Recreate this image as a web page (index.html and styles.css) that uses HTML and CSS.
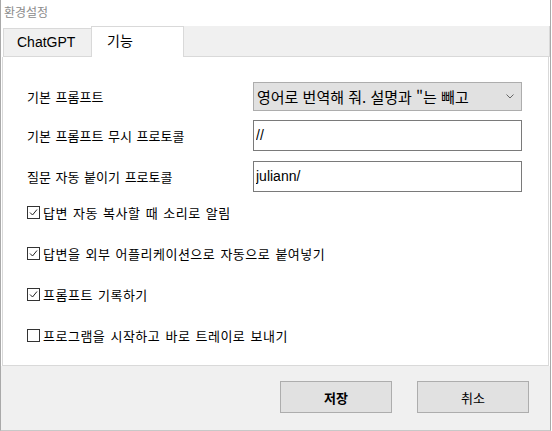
FILE: index.html
```html
<!DOCTYPE html>
<html lang="ko">
<head>
    <meta charset="UTF-8">
    <title>환경설정</title>
    <link rel="stylesheet" href="styles.css">
</head>
<body>
    <div class="window">
        <div class="titlebar">환경설정</div>

        <div class="tabs">
            <div class="tab">ChatGPT</div>
            <div class="tab active">기능</div>
            <div class="tab-fill"></div>
        </div>

        <div class="panel">
            <div class="field">
                <label class="field-label">기본 프롬프트</label>
                <div class="select">
                    <span>영어로 번역해 줘. 설명과 "는 빼고</span>
                    <svg class="chevron" width="8" height="5" viewBox="0 0 8 5">
                        <path d="M0.5 0.5 L4 4 L7.5 0.5" fill="none" stroke="#666" stroke-width="1"/>
                    </svg>
                </div>
            </div>
            <div class="field">
                <label class="field-label">기본 프롬프트 무시 프로토콜</label>
                <input class="text-input" type="text" value="//">
            </div>
            <div class="field">
                <label class="field-label">질문 자동 붙이기 프로토콜</label>
                <input class="text-input" type="text" value="juliann/">
            </div>

            <div class="checks">
                <label class="check">
                    <span class="box"><svg width="11" height="11" viewBox="0 0 11 11"><path d="M2 5.5 L4.5 8 L9 2.5" fill="none" stroke="#222" stroke-width="1"/></svg></span>
                    답변 자동 복사할 때 소리로 알림
                </label>
                <label class="check">
                    <span class="box"><svg width="11" height="11" viewBox="0 0 11 11"><path d="M2 5.5 L4.5 8 L9 2.5" fill="none" stroke="#222" stroke-width="1"/></svg></span>
                    답변을 외부 어플리케이션으로 자동으로 붙여넣기
                </label>
                <label class="check">
                    <span class="box"><svg width="11" height="11" viewBox="0 0 11 11"><path d="M2 5.5 L4.5 8 L9 2.5" fill="none" stroke="#222" stroke-width="1"/></svg></span>
                    프롬프트 기록하기
                </label>
                <label class="check">
                    <span class="box"></span>
                    프로그램을 시작하고 바로 트레이로 보내기
                </label>
            </div>
        </div>

        <div class="footer">
            <button class="btn default">저장</button>
            <button class="btn">취소</button>
        </div>
    </div>
</body>
</html>
```

FILE: styles.css
```css
:root {
    --face: #f0f0f0;
    --edge: #d9d9d9;
    --frame: #a9a9a9;
    --btn-bg: #e1e1e1;
    --btn-border: #adadad;
    --input-border: #7a7a7a;
    --text: #000000;
}

* {
    box-sizing: border-box;
    margin: 0;
    padding: 0;
}

body {
    font-family: "Noto Sans CJK KR", "Noto Sans", sans-serif;
    font-size: 13px;
    word-spacing: 1px;
    color: var(--text);
    background: #ffffff;
}

.window {
    width: 551px;
    height: 431px;
    display: flex;
    flex-direction: column;
    border-left: 1px solid var(--frame);
    border-right: 1px solid var(--frame);
    border-bottom: 1px solid #c8c8c8;
}

.titlebar {
    height: 26px;
    padding: 3px 0 0 3px;
    font-size: 12px;
    color: #8c8c8c;
    background: #ffffff;
}

/* tab strip */
.tabs {
    height: 31px;
    display: flex;
    padding-left: 2px;
}

.tab {
    width: 89px;
    margin-top: 2px;
    background: var(--face);
    border: 1px solid var(--edge);
    display: flex;
    align-items: center;
    padding: 0 0 1px 13px;
    font-family: "Liberation Sans", "Noto Sans CJK KR", sans-serif;
    font-size: 14px;
}

.tab.active {
    width: 93px;
    margin-top: 0;
    margin-left: -1px;
    background: #ffffff;
    border-bottom: none;
    padding: 0 0 4px 15px;
    font-family: "Noto Sans CJK KR", sans-serif;
}

.tab-fill {
    flex: 1;
    background: var(--face);
    border-bottom: 1px solid var(--edge);
    border-right: 1px solid var(--edge);
}

/* settings page */
.panel {
    height: 309px;
    margin: 0 1px;
    background: #ffffff;
    border: 1px solid var(--edge);
    border-top: none;
    padding: 25px 0 0 24px;
}

.field {
    display: flex;
    align-items: center;
    height: 31px;
    margin-bottom: 10px;
}

.field:first-child {
    height: 29px;
    margin-bottom: 9px;
}

.field-label {
    width: 226px;
    padding-bottom: 1px;
}

.select {
    width: 269px;
    height: 29px;
    background: var(--btn-bg);
    border: 1px solid var(--btn-border);
    display: flex;
    align-items: center;
    justify-content: space-between;
    padding: 0 7px 1px 3px;
    font-size: 15px;
    word-spacing: 0;
}

.chevron {
    margin-top: 1px;
}

.text-input {
    width: 269px;
    height: 31px;
    border: 1px solid var(--input-border);
    padding: 0 2px 1px;
    font-family: "Liberation Sans", "Noto Sans CJK KR", sans-serif;
    font-size: 14px;
    color: var(--text);
    background: #ffffff;
    outline: none;
}

.checks {
    display: flex;
    flex-direction: column;
    gap: 21px;
    margin-top: 5px;
}

.check {
    display: flex;
    align-items: center;
    height: 20px;
    gap: 3px;
    letter-spacing: 0.5px;
}

.box {
    width: 13px;
    height: 13px;
    border: 1px solid #333333;
    background: #ffffff;
    display: flex;
    align-items: center;
    justify-content: center;
    margin-top: 1px;
}

/* dialog buttons */
.footer {
    flex: 1;
    background: var(--face);
    display: flex;
    justify-content: flex-end;
    gap: 25px;
    padding: 15px 21px 0 0;
}

.btn {
    width: 112px;
    height: 32px;
    background: var(--btn-bg);
    border: 1px solid var(--btn-border);
    font-family: "Noto Sans CJK KR", sans-serif;
    font-size: 13px;
    color: var(--text);
}

.btn.default {
    font-weight: bold;
}
```
